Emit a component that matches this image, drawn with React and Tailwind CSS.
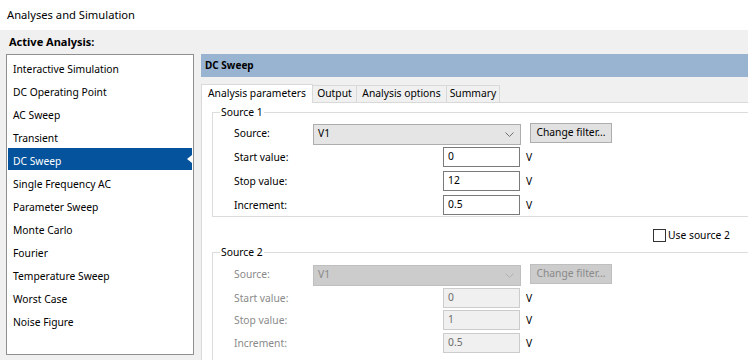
import React from "react";

const analyses = [
  "Interactive Simulation",
  "DC Operating Point",
  "AC Sweep",
  "Transient",
  "DC Sweep",
  "Single Frequency AC",
  "Parameter Sweep",
  "Monte Carlo",
  "Fourier",
  "Temperature Sweep",
  "Worst Case",
  "Noise Figure",
];

const Chevron = ({ color }) => (
  <svg width="9" height="5" viewBox="0 0 9 5" className="shrink-0">
    <path d="M0.5 0.5 L4.5 4.5 L8.5 0.5" fill="none" stroke={color} strokeWidth="1" />
  </svg>
);

const ValueRow = ({ label, value, disabled, className }) => (
  <div className={`flex items-center h-[20px] ${className}`}>
    <div className={`w-[209px] shrink-0 mt-[1px] ${disabled ? "text-[#8a8a8a]" : ""}`}>{label}</div>
    <div
      className={`w-[77px] shrink-0 h-[20px] border flex items-center pl-[4px] ${
        disabled ? "bg-[#f0f0f0] border-[#cccccc] text-[#6d6d6d]" : "bg-white border-[#7a7a7a]"
      }`}
    >
      {value}
    </div>
    <div className="ml-[6px] mt-[2px]">V</div>
  </div>
);

const SourceGroup = ({ title, disabled, values, gaps, className }) => (
  <div className={`relative shrink-0 border border-[#dcdcdc] w-[560px] pl-[21px] ${className}`}>
    <div className="absolute left-[7px] top-[-8px] bg-white px-[1px] leading-[14px]">{title}</div>
    <div className="flex items-center h-[22px]">
      <div className={`w-[79px] shrink-0 ${disabled ? "text-[#8a8a8a]" : ""}`}>Source:</div>
      <div
        className={`w-[208px] shrink-0 h-[21px] border flex items-center justify-between pl-[4px] pr-[6px] ${
          disabled ? "bg-[#cccccc] border-[#bfbfbf] text-[#8a8a8a]" : "bg-[#e5e5e5] border-[#adadad]"
        }`}
      >
        <span>V1</span>
        <Chevron color={disabled ? "#b0b0b0" : "#707070"} />
      </div>
      <div
        className={`ml-[9px] w-[82px] shrink-0 h-[20px] border flex items-center justify-center self-start ${
          disabled ? "bg-[#cccccc] border-[#bfbfbf] text-[#8a8a8a]" : "bg-[#e1e1e1] border-[#adadad]"
        }`}
      >
        Change filter...
      </div>
    </div>
    <ValueRow label="Start value:" value={values[0]} disabled={disabled} className={gaps[0]} />
    <ValueRow label="Stop value:" value={values[1]} disabled={disabled} className={gaps[1]} />
    <ValueRow label="Increment:" value={values[2]} disabled={disabled} className={gaps[2]} />
  </div>
);

export default function App() {
  return (
    <div className="w-[748px] h-[360px] overflow-hidden bg-[#f0f0f0] text-black font-['Noto_Sans',sans-serif] text-[10.3px]">
      {/* title */}
      <div className="h-[30px] bg-white flex items-center pl-[7px] text-[11.2px]">Analyses and Simulation</div>
      <div className="h-[24px] flex items-center pl-[9px] font-bold text-[11px]">Active Analysis:</div>

      <div className="flex">
        {/* analysis list */}
        <div className="ml-[6px] w-[188px] shrink-0 h-[301px] border border-[#8f8f8f] bg-white px-[1px] pt-[1px]">
          {analyses.map((name) => {
            const selected = name === "DC Sweep";
            return (
              <div
                key={name}
                className={`relative h-[22px] mb-[1px] pl-[5px] pt-[2px] leading-[22px] ${
                  selected ? "bg-[#04539c] text-white" : ""
                }`}
              >
                {name}
                {selected && (
                  <div className="absolute right-0 top-[7px] w-0 h-0 border-y-[4px] border-y-transparent border-r-[5px] border-r-white" />
                )}
              </div>
            );
          })}
        </div>

        {/* right panel */}
        <div className="ml-[7px] flex-1 min-w-0 flex flex-col">
          <div className="h-[23px] bg-[#99b4d1] flex items-center pl-[4px] font-bold text-[10px]">DC Sweep</div>

          <div className="mt-[7px] flex items-end h-[18px]">
            <div className="relative z-10 h-[19px] -mb-px w-[112px] bg-white border border-b-0 border-[#d9d9d9] pl-[6px] flex items-center">
              Analysis parameters
            </div>
            <div className="h-[17px] w-[44px] border border-l-0 border-b-0 border-[#d9d9d9] flex items-center justify-center">Output</div>
            <div className="h-[17px] w-[90px] border border-l-0 border-b-0 border-[#d9d9d9] flex items-center justify-center">Analysis options</div>
            <div className="h-[17px] w-[53px] border border-l-0 border-b-0 border-[#d9d9d9] flex items-center justify-center">Summary</div>
          </div>

          <div className="h-[258px] bg-white border-t border-l border-[#d9d9d9] pl-[10px] pt-[9px] overflow-hidden">
            <SourceGroup
              title="Source 1"
              values={["0", "12", "0.5"]}
              gaps={["mt-[2px]", "mt-[4px]", "mt-[4px]"]}
              className="h-[105px] pt-[10px]"
            />

            <div className="mt-[12px] ml-[441px] flex items-center h-[13px]">
              <div className="w-[13px] h-[13px] shrink-0 border border-[#333333] bg-white" />
              <span className="ml-[2px] whitespace-nowrap">Use source 2</span>
            </div>

            <SourceGroup
              title="Source 2"
              disabled
              values={["0", "1", "0.5"]}
              gaps={["mt-[2px]", "mt-[2px]", "mt-[3px]"]}
              className="mt-[10px] h-[130px] pt-[11px]"
            />
          </div>
        </div>
      </div>
    </div>
  );
}
